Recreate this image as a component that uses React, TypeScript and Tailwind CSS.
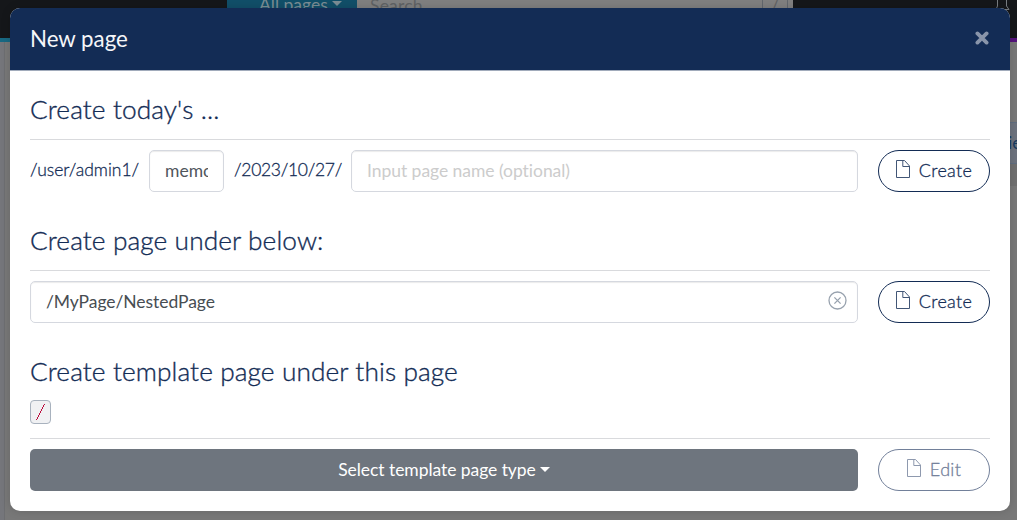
import type { ReactNode } from 'react';

function FileIcon() {
  return (
    <svg className="h-[18px] w-[14px] shrink-0" viewBox="0 0 14 18" fill="none" stroke="currentColor" strokeWidth="1" opacity="0.8">
      <path d="M0.5 0.5H8.5L13.5 6V17.5H0.5Z" />
      <path d="M6.8 0.5V6.5H13.5" />
    </svg>
  );
}

function ActionButton({ children, muted = false }: { children: ReactNode; muted?: boolean }) {
  return (
    <button
      className={
        'ml-5 flex h-[42px] w-[112px] shrink-0 items-center justify-center rounded-full border text-[18px] font-light leading-[26px] tracking-[0.3px] [-webkit-text-stroke:0.3px] ' +
        (muted ? 'border-[#72809a] text-[#72809a]' : 'border-[#132c55] text-[#132c55]')
      }
    >
      <span className="mr-[9px] -mt-[5px]"><FileIcon /></span>
      <span className="-mt-0.5">{children}</span>
    </button>
  );
}

function Heading({ children }: { children: ReactNode }) {
  return <h3 className="h-8 whitespace-nowrap text-[26.25px] font-light leading-[31px] tracking-[0.1px] text-[#132c55] [-webkit-text-stroke:0.35px]">{children}</h3>;
}

function Backdrop() {
  return (
    <div className="absolute inset-0 flex flex-col bg-[#787878]">
      <div className="flex h-[38px] shrink-0 bg-[#15171a] text-[17.5px]">
        <div className="w-[227px]" />
        <div className="flex h-[18px] w-[130px] bg-[#114f69] pl-8 text-[#7b8d95]">
          <span className="-mt-[7px] leading-6">All pages</span>
          <span className="ml-[4px] mt-px h-0 w-0 border-x-5 border-t-5 border-x-transparent border-t-[#7b8d95]" />
        </div>
        <div className="flex h-[18px] w-[436px] bg-[#808080] pl-[13px] text-[#606365]">
          <span className="-mt-[6px] flex-1 leading-6 tracking-[0.2px]">Search</span>
          <span className="mr-[5px] flex w-[26px] justify-center border-x border-[#62676d] leading-3">/</span>
        </div>
        <div className="flex flex-1 justify-end pr-[7px]">
          <svg className="h-3 w-[15px]" viewBox="0 0 15 12" fill="none" stroke="#787d82">
            <path d="M2.5 0V6L1 9.5H14L11.5 6V0" />
          </svg>
        </div>
      </div>
      <div className="h-1 shrink-0 bg-linear-to-r from-[#176983] to-[#54127b]" />
      <div className="flex flex-1">
        <div className="w-[5px] border-r border-[#6d6e71] bg-[#75767b]" />
        <div className="flex-1" />
        <div className="w-2 pt-20">
          <div className="h-[42px] border-y border-[#606e80] bg-[#6d737e] text-[17.5px] leading-10 text-[#173b60]">
            <span className="-ml-px">ie</span>
          </div>
          <div className="h-[22px] bg-[#707070]" />
        </div>
      </div>
    </div>
  );
}

export default function App() {
  return (
    <div className="relative h-[520px] w-[1017px] overflow-hidden font-[Lato,sans-serif]">
      <Backdrop />
      <div className="relative px-[10px] pt-2">
        <div className="flex w-[1000px] flex-col overflow-hidden rounded-[10px] bg-white text-[17.5px] text-[#132c55] shadow-[0_0_10px_rgba(0,0,0,0.15)]">
          <header className="flex h-[63px] shrink-0 items-center justify-between border-b border-[#a1abbb] bg-[#132c55] pl-5 pr-[21px]">
            <h2 className="-mt-px text-[22.3px] text-[#f5f6f9]">New page</h2>
            <button aria-label="Close" className="-mt-0.5 text-[#8995aa]">
              <svg className="h-[14px] w-[14px]" viewBox="0 0 14 14" fill="none" stroke="currentColor" strokeWidth="3.8" strokeLinecap="round">
                <path d="M2.4 2.4L11.6 11.6M11.6 2.4L2.4 11.6" />
              </svg>
            </button>
          </header>
          <div className="h-[440px] px-5 pt-[23px]">
            <section>
              <Heading>Create today's ...</Heading>
              <div className="mt-[13px] flex border-t border-[#d9dadd] pt-[10px]">
                <span className="w-[119px] whitespace-nowrap font-light leading-10 [-webkit-text-stroke:0.3px]">/user/admin1/</span>
                <div className="h-[42px] w-[75px] rounded-[5px] border border-[#d5d8df] px-[15px] leading-10 text-[#50565d] shadow-[inset_0_1px_1px_rgba(0,0,0,0.08)]">
                  <div className="w-[43px] overflow-hidden">memo</div>
                </div>
                <span className="w-[127px] whitespace-nowrap pl-[10px] font-light leading-10 tracking-[-0.3px] [-webkit-text-stroke:0.3px]">/2023/10/27/</span>
                <div className="h-[42px] w-[507px] rounded-[5px] border border-[#d5d8df] px-[15px] leading-10 tracking-[-0.04px] text-[#cccccc] shadow-[inset_0_1px_1px_rgba(0,0,0,0.08)]">
                  Input page name (optional)
                </div>
                <ActionButton>Create</ActionButton>
              </div>
            </section>
            <section className="mt-[33px]">
              <Heading>Create page under below:</Heading>
              <div className="mt-[13px] flex border-t border-[#d9dadd] pt-[10px]">
                <div className="flex h-[42px] flex-1 items-center justify-between rounded-[5px] border border-[#d5d8df] pl-[15px] pr-[10px] text-[#474d52] shadow-[inset_0_1px_1px_rgba(0,0,0,0.08)]">
                  <span className="tracking-[-0.06px]">/MyPage/NestedPage</span>
                  <svg className="-mt-[3px] h-[19px] w-[19px]" viewBox="0 0 19 19" fill="none" stroke="#98a2ae" strokeWidth="1.3">
                    <circle cx="9.5" cy="9.5" r="8.5" />
                    <path d="M6.4 6.4L12.6 12.6M12.6 6.4L6.4 12.6" />
                  </svg>
                </div>
                <ActionButton>Create</ActionButton>
              </div>
            </section>
            <section className="mt-[33px]">
              <Heading>Create template page under this page</Heading>
              <code className="mt-[12px] flex h-6 w-[21px] items-center justify-center rounded-[4px] border border-[#a8b2be] bg-[#f0f1f3] text-[#bd0f3f]">
                <svg className="h-4 w-[9px]" viewBox="0 0 9 16" fill="none" stroke="currentColor" shapeRendering="crispEdges">
                  <path d="M0.5 16L8.5 0" />
                </svg>
              </code>
              <div className="mt-[14px] flex border-t border-[#d9dadd] pt-[10px]">
                <button className="flex h-[42px] flex-1 items-center justify-center rounded-[5px] bg-[#6e757e] text-white">
                  <span className="tracking-[-0.06px]">Select template page type</span>
                  <span className="ml-1 -mt-0.5 h-0 w-0 border-x-5 border-t-5 border-x-transparent border-t-white" />
                </button>
                <ActionButton muted>Edit</ActionButton>
              </div>
            </section>
          </div>
        </div>
      </div>
    </div>
  );
}
